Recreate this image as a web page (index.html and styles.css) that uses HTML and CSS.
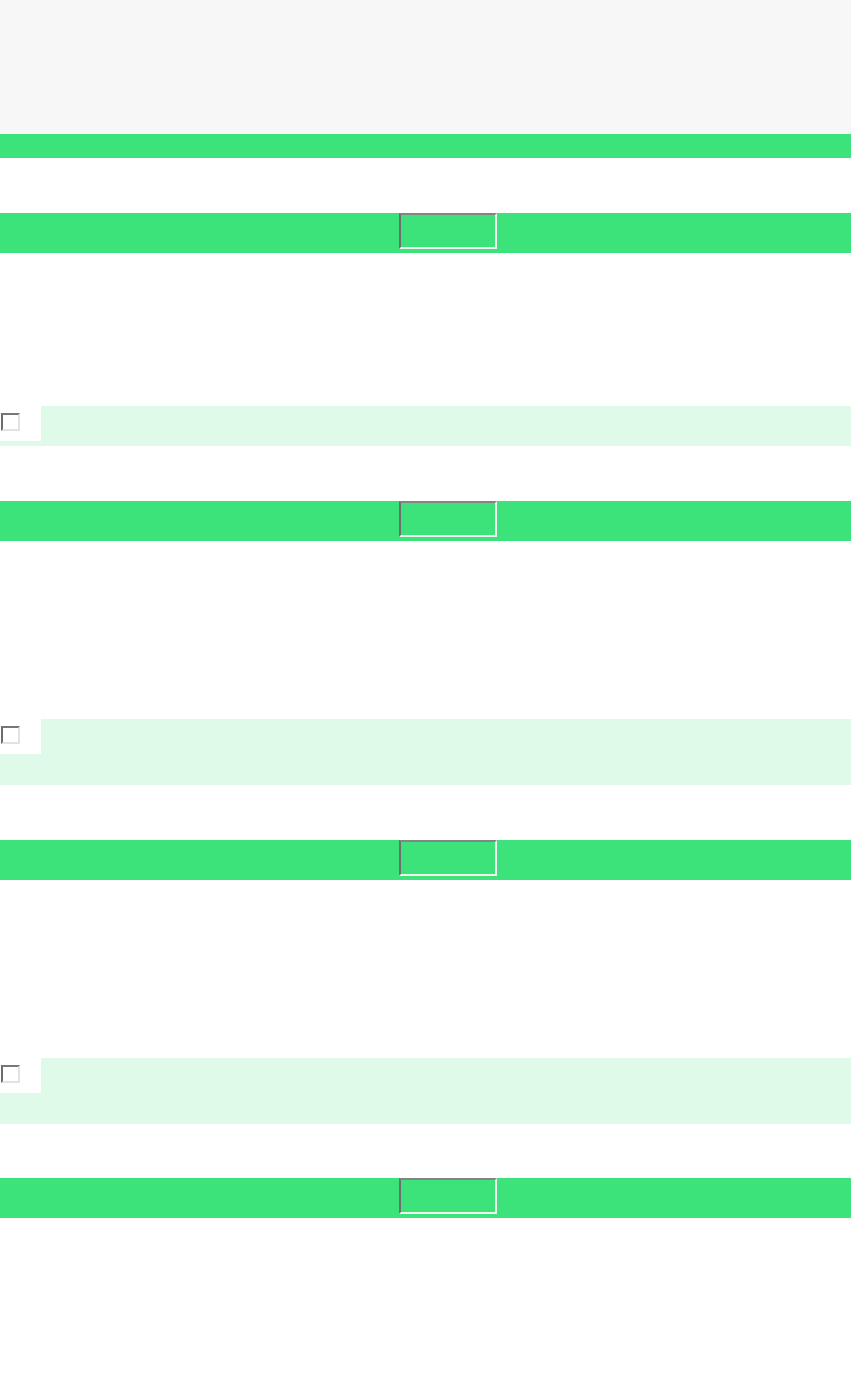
FILE: index.html
```html
<!DOCTYPE html>
<html>
<head>
<meta charset="utf-8">
	<title></title>
	<link rel="stylesheet" href="styles.css">
</head>
<body>
	<div id="top"></div>
	<div id="strip"></div>

	<div class="bar"><span class="btn"></span></div>
	<div class="row short"><div class="box"><span class="check"></span></div></div>

	<div class="bar"><span class="btn"></span></div>
	<div class="row tall"><div class="box"><span class="check"></span></div></div>

	<div class="bar"><span class="btn"></span></div>
	<div class="row tall"><div class="box"><span class="check"></span></div></div>

	<div class="bar last"><span class="btn"></span></div>
</body>
</html>
```

FILE: styles.css
```css
body{margin: 0;padding: 0;background-color: #fff;font-family: "Liberation Sans", Arial, sans-serif;}

#top{height: 134px;background-color: #f7f7f7;}
#strip{height: 24px;background-color: #3ce37b;}

.bar{display: flex;justify-content: center;align-items: flex-start;height: 40px;padding-left: 45px;margin-top: 55px;background-color: #3ce37b;}
.bar.last{margin-top: 54px;}
.btn{display: block;width: 94px;height: 32px;border: 2px solid;border-color: #848484 #f0f0f0 #f0f0f0 #6f6f6f;}

.row{background-color: #dffae9;margin-top: 178px;}
.row.short{height: 40px;margin-top: 153px;}
.row.tall{height: 66px;}
.box{width: 41px;height: 35px;background-color: #fff;padding-top: 7px;box-sizing: border-box;}
.check{display: block;width: 15px;height: 14px;margin-left: 1px;background-color: #fff;border: 2px solid;border-color: #777 #e2e2e2 #e2e2e2 #6c6c6c;}
```
